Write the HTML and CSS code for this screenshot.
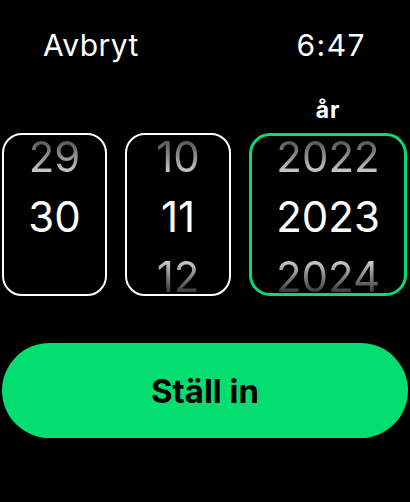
FILE: index.html
```html
<!DOCTYPE html>
<html lang="sv">
<head>
<meta charset="utf-8">
<link rel="stylesheet" href="styles.css">
</head>
<body>
<div class="screen">
  <header class="top">
    <span class="cancel">Avbryt</span>
    <span class="time">6:47</span>
  </header>
  <div class="labels">
    <span class="label day"></span>
    <span class="label month"></span>
    <span class="label year">år</span>
  </div>
  <div class="pickers">
    <div class="picker day">
      <div class="rows">
        <div class="row prev">29</div>
        <div class="row cur">30</div>
      </div>
    </div>
    <div class="picker month">
      <div class="rows">
        <div class="row prev">10</div>
        <div class="row cur">11</div>
        <div class="row next">12</div>
      </div>
    </div>
    <div class="picker year active">
      <div class="rows">
        <div class="row prev">2022</div>
        <div class="row cur">2023</div>
        <div class="row next">2024</div>
      </div>
    </div>
  </div>
  <button class="set">Ställ in</button>
</div>
</body>
</html>
```
FILE: styles.css
```css
html, body {
  margin: 0;
  padding: 0;
  background: #000;
}
.screen {
  width: 410px;
  height: 502px;
  background: #000;
  color: #fff;
  font-family: Inter, "Noto Sans", sans-serif;
  display: flex;
  flex-direction: column;
  overflow: hidden;
}
.top {
  display: flex;
  justify-content: space-between;
  padding: 27px 44px 0 43px;
  font-size: 30px;
  line-height: 36px;
}
.cancel { letter-spacing: 0.5px; }
.time { letter-spacing: 1.5px; }
.labels {
  display: flex;
  gap: 18px;
  padding: 0 3px 0 2px;
  margin-top: 35px;
  height: 24px;
}
.label {
  font-size: 23px;
  font-weight: 700;
  line-height: 24px;
  text-align: center;
  letter-spacing: 1px;
}
.label.day { width: 105px; }
.label.month { width: 106px; }
.label.year { width: 158px; }
.pickers {
  display: flex;
  gap: 18px;
  padding: 0 3px 0 2px;
  margin-top: 11px;
}
.picker {
  box-sizing: border-box;
  height: 163px;
  border: 2px solid #fff;
  border-radius: 20px;
  overflow: hidden;
}
.picker.day { width: 105px; }
.picker.month { width: 106px; }
.picker.year { width: 158px; }
.picker.active {
  border: 3px solid #05dc72;
  border-radius: 21px;
}
.rows {
  display: flex;
  flex-direction: column;
  margin-top: -8px;
}
.picker.active .rows { margin-top: -9px; }
.row {
  height: 60px;
  line-height: 60px;
  text-align: center;
  font-size: 42px;
  font-weight: 400;
}
.row.prev {
  background: linear-gradient(to bottom, #5a5a5a 25%, #c8c8c8 75%);
  -webkit-background-clip: text;
  background-clip: text;
  color: transparent;
}
.row.next {
  background: linear-gradient(to bottom, #c8c8c8 25%, #3a3a3a 75%);
  -webkit-background-clip: text;
  background-clip: text;
  color: transparent;
}
.set {
  margin: 47px 2px 0 2px;
  height: 95px;
  border: none;
  border-radius: 48px;
  background: #04de71;
  color: #000;
  font-family: Inter, "Noto Sans", sans-serif;
  font-size: 33px;
  font-weight: 700;
  padding: 0;
}
```
